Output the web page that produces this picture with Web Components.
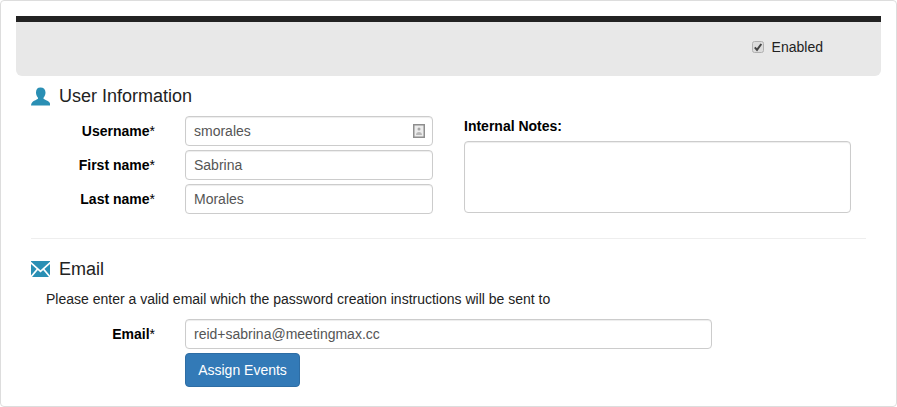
<!DOCTYPE html>
<html>
<head>
<meta charset="utf-8">
<title>User</title>
<style>
  html, body { margin: 0; padding: 0; background: #fff; }
  body { font-family: "Liberation Sans", Arial, sans-serif; font-size: 14px; color: #333; }
</style>
</head>
<body>
<user-card>
  <status-bar></status-bar>
  <section-head>
    <svg slot="icon" width="19" height="19" viewBox="0 0 19 19"><path fill="#2a8fb4" d="M9.500 0.500c3.100 0 5 2 5 4.900 0 2.100-0.800 3.800-1.800 5-0.400 0.500-0.300 1.300 0.200 1.700 1 0.800 3.300 1.500 4.600 2.400 1 0.700 1.700 2 2 3.900H0c0.300-1.900 1-3.200 2-3.900 1.300-0.900 3.600-1.600 4.600-2.400 0.500-0.400 0.600-1.200 0.200-1.700-1-1.200-1.800-2.900-1.800-5C5 2.500 6.400 0.500 9.500 0.500z"/></svg>
    User Information
  </section-head>
  <info-columns>
    <form-row slot="left" label="Username" value="smorales" badge></form-row>
    <form-row slot="left" label="First name" value="Sabrina"></form-row>
    <form-row slot="left" label="Last name" value="Morales"></form-row>
    <notes-field slot="right"></notes-field>
  </info-columns>
  <hr-line></hr-line>
  <section-head email>
    <svg slot="icon" width="19" height="16" viewBox="0 0 19 16"><rect width="19" height="16" fill="#2a8fb4"/><path d="M-0.500 1.500L9.500 10.300 19.500 1.500M-0.500 16.500L6.800 7.800M19.500 16.500L12.200 7.800" fill="none" stroke="#fff" stroke-width="1.700"/></svg>
    Email
  </section-head>
  <email-note>Please enter a valid email which the password creation instructions will be sent to</email-note>
  <form-row wide label="Email" value="reid+sabrina@meetingmax.cc"></form-row>
  <action-button>Assign Events</action-button>
</user-card>
<script>
  class UserCard extends HTMLElement {
    constructor() {
      super();
      this.attachShadow({ mode: "open" }).innerHTML = `
        <style>
          :host { display: block; box-sizing: border-box; width: 897px; height: 407px; background: #fff;
            border: 1px solid #ddd; border-radius: 4px; padding: 15px; }
        </style>
        <slot></slot>`;
    }
  }

  class StatusBar extends HTMLElement {
    constructor() {
      super();
      this.attachShadow({ mode: "open" }).innerHTML = `
        <style>
          :host { display: flex; justify-content: flex-end; align-items: center; box-sizing: border-box;
            width: 865px; height: 60px; background: #e8e8e8; border-top: 6px solid #222;
            border-radius: 0 0 6px 6px; padding: 0 58px 5px 0; color: #222; }
          .check { display: flex; align-items: center; gap: 8px; }
          svg { display: block; }
        </style>
        <div class="check">
          <svg width="12" height="12" viewBox="0 0 12 12">
            <rect x="0.500" y="0.500" width="11" height="11" rx="2" fill="#dcdcdc" stroke="#b0b0b0"/>
            <path d="M2.800 6.300L5 8.800 9.300 3" fill="none" stroke="#444" stroke-width="2"/>
          </svg>
          Enabled
        </div>`;
    }
  }

  class SectionHead extends HTMLElement {
    constructor() {
      super();
      this.attachShadow({ mode: "open" }).innerHTML = `
        <style>
          :host { display: flex; align-items: center; gap: 9px; height: 20px; margin: 10px 0 0 15px;
            font-size: 18px; line-height: 20px; color: #222; }
          :host([email]) { margin-top: 20px; }
          .icon { display: flex; width: 19px; justify-content: center; }
        </style>
        <span class="icon"><slot name="icon"></slot></span><slot></slot>`;
    }
  }

  class InfoColumns extends HTMLElement {
    constructor() {
      super();
      this.attachShadow({ mode: "open" }).innerHTML = `
        <style>
          :host { display: flex; margin: 10px 0 0 15px; gap: 31px; }
          .left { display: flex; flex-direction: column; gap: 4px; }
        </style>
        <div class="left"><slot name="left"></slot></div>
        <slot name="right"></slot>`;
    }
  }

  class FormRow extends HTMLElement {
    constructor() {
      super();
      this.attachShadow({ mode: "open" }).innerHTML = `
        <style>
          :host { display: flex; align-items: center; gap: 30px; }
          :host([wide]) { margin: 10px 0 0 15px; }
          .label { width: 124px; text-align: right; font-weight: 700; color: #000; }
          .label span { font-weight: 400; }
          .field { position: relative; display: block; }
          input { display: block; box-sizing: border-box; width: 248px; height: 30px; padding: 4px 8px;
            border: 1px solid #ccc; border-radius: 4px; color: #555; background: #fff;
            font: 14px "Liberation Sans", Arial, sans-serif; box-shadow: inset 0 1px 1px rgba(0,0,0,.075); }
          :host([wide]) input { width: 527px; }
          svg { position: absolute; right: 8px; top: 8px; }
        </style>
        <div class="label"></div>
        <div class="field"><input type="text"></div>`;
    }

    connectedCallback() {
      const label = this.shadowRoot.querySelector(".label");
      label.innerHTML = `${this.getAttribute("label")}<span>*</span>`;
      this.shadowRoot.querySelector("input").value = this.getAttribute("value");
      if (this.hasAttribute("badge")) {
        this.shadowRoot.querySelector(".field").insertAdjacentHTML("beforeend", `
          <svg width="12" height="14" viewBox="0 0 12 14">
            <rect x="0.750" y="0.750" width="10.500" height="12.500" fill="#ececec" stroke="#8e8e8e" stroke-width="1.500"/>
            <circle cx="6" cy="5" r="1.500" fill="#a8a8a8"/>
            <path d="M3 11c0-2 1.200-3 3-3s3 1 3 3z" fill="#b8b8b8"/>
          </svg>`);
      }
    }
  }

  class NotesField extends HTMLElement {
    constructor() {
      super();
      this.attachShadow({ mode: "open" }).innerHTML = `
        <style>
          :host { display: block; }
          .title { font-weight: 700; color: #000; line-height: 20px; margin-bottom: 5px; }
          .box { box-sizing: border-box; width: 387px; height: 72px; border: 1px solid #ccc; border-radius: 4px;
            box-shadow: inset 0 1px 1px rgba(0,0,0,.075); }
        </style>
        <div class="title">Internal Notes:</div>
        <div class="box"></div>`;
    }
  }

  class HrLine extends HTMLElement {
    constructor() {
      super();
      this.attachShadow({ mode: "open" }).innerHTML = `
        <style>
          :host { display: block; height: 1px; width: 835px; margin: 24px 0 0 15px; background: #eee; }
        </style>`;
    }
  }

  class EmailNote extends HTMLElement {
    constructor() {
      super();
      this.attachShadow({ mode: "open" }).innerHTML = `
        <style>
          :host { display: block; margin: 10px 0 0 30px; line-height: 20px; color: #222; }
        </style>
        <slot></slot>`;
    }
  }

  class ActionButton extends HTMLElement {
    constructor() {
      super();
      this.attachShadow({ mode: "open" }).innerHTML = `
        <style>
          :host { display: block; margin: 4px 0 0 169px; }
          button { box-sizing: border-box; width: 115px; height: 34px; padding: 0; background: #337ab7;
            border: 1px solid #2e6da4; border-radius: 4px; color: #fff;
            font: 14px "Liberation Sans", Arial, sans-serif; }
        </style>
        <button type="button"><slot></slot></button>`;
    }
  }

  customElements.define("user-card", UserCard);
  customElements.define("status-bar", StatusBar);
  customElements.define("section-head", SectionHead);
  customElements.define("info-columns", InfoColumns);
  customElements.define("form-row", FormRow);
  customElements.define("notes-field", NotesField);
  customElements.define("hr-line", HrLine);
  customElements.define("email-note", EmailNote);
  customElements.define("action-button", ActionButton);
</script>
</body>
</html>
